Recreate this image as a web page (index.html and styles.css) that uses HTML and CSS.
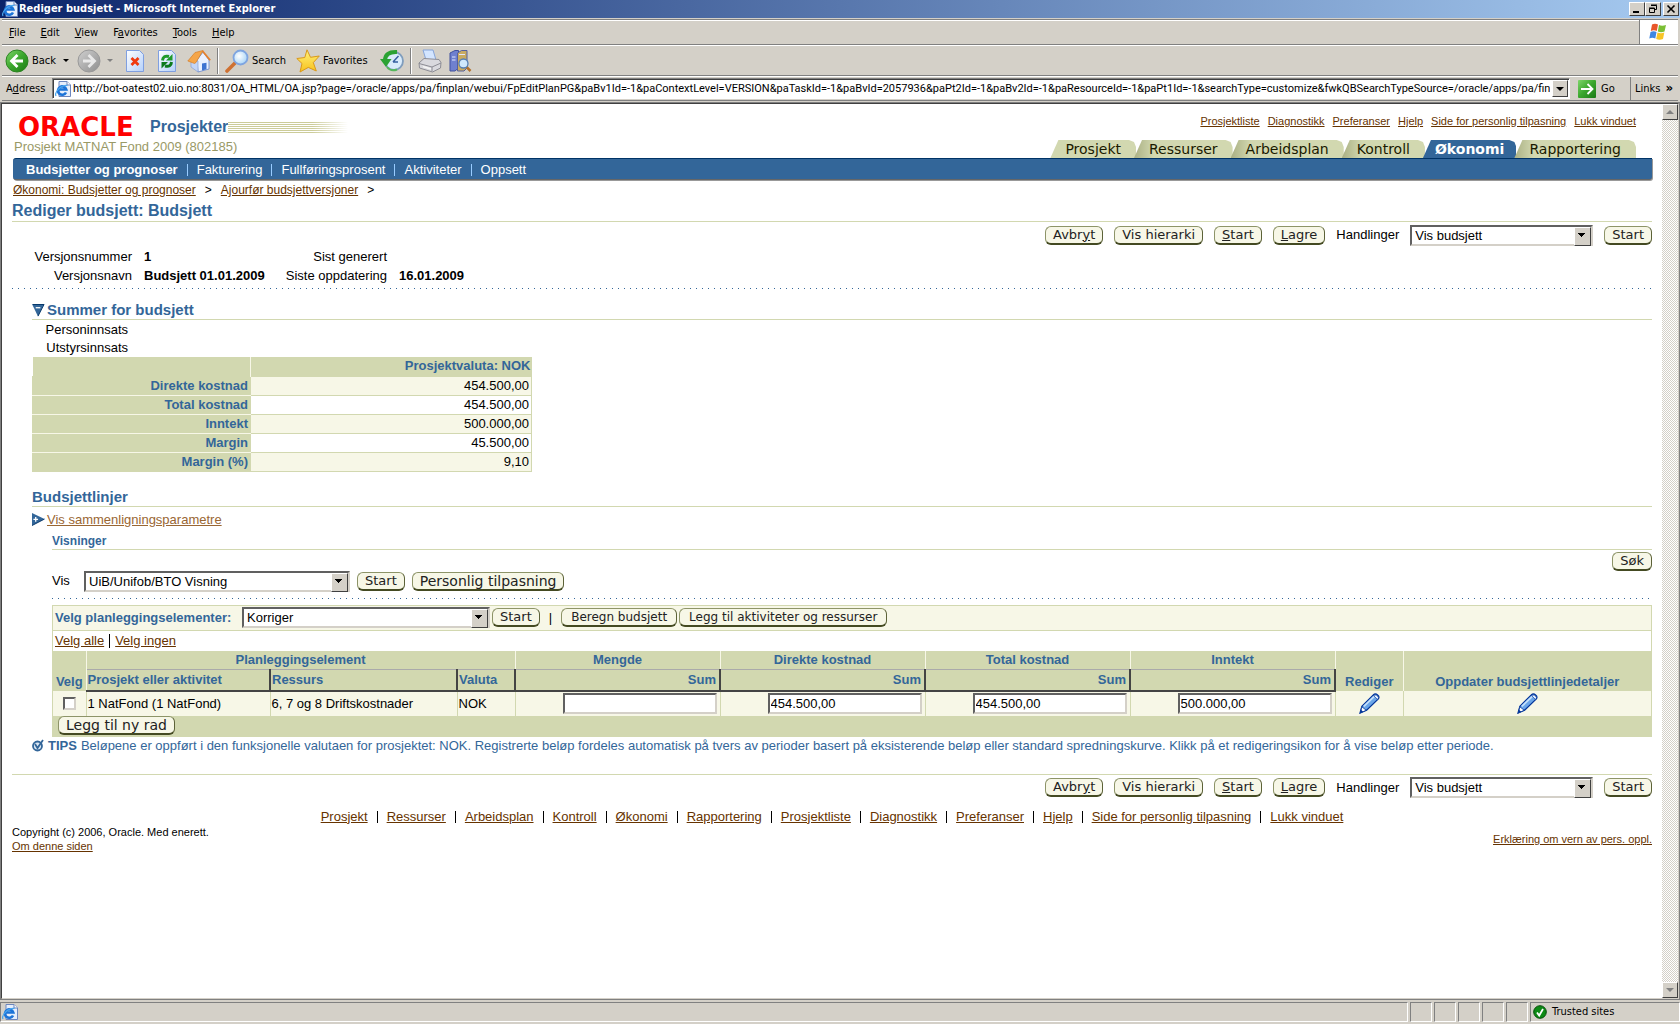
FILE: index.html
```html
<!DOCTYPE html>
<html lang="no">
<head>
<meta charset="utf-8">
<title>Rediger budsjett</title>
<link rel="stylesheet" href="styles.css">
</head>
<body>
<svg class="defs" aria-hidden="true">
  <defs>
    <linearGradient id="g-green" x1="0" y1="0" x2="1" y2="1"><stop offset="0" stop-color="#7fd66a"/><stop offset=".5" stop-color="#3aa62c"/><stop offset="1" stop-color="#1c7a16"/></linearGradient>
    <linearGradient id="g-grey" x1="0" y1="0" x2="1" y2="1"><stop offset="0" stop-color="#d0d0d0"/><stop offset="1" stop-color="#8e8e8e"/></linearGradient>
    <linearGradient id="g-page" x1="0" y1="0" x2="1" y2="1"><stop offset="0" stop-color="#fff"/><stop offset="1" stop-color="#b4d0fa"/></linearGradient>
    <linearGradient id="g-star" x1="0" y1="0" x2="0" y2="1"><stop offset="0" stop-color="#fff27a"/><stop offset="1" stop-color="#f7c11c"/></linearGradient>
    <radialGradient id="g-lens" cx=".4" cy=".4" r=".7"><stop offset="0" stop-color="#fff"/><stop offset="1" stop-color="#9fd0f6"/></radialGradient>
    <symbol id="ie" viewBox="0 0 16 16">
      <path d="M4 .5h8l3.500 3.500v11.500H4z" fill="#e6eefb" stroke="#6d86bd"/>
      <path d="M12 .5V4h3.500" fill="#fff" stroke="#6d86bd"/>
      <path d="M11 11.500A4.200 4.200 0 1 1 11.300 8.500H4" fill="none" stroke="#1c74d8" stroke-width="2.600"/>
      <path d="M1 15C-1 11 6 4 12.500 4.500" fill="none" stroke="#49a6ee" stroke-width="1.200"/>
    </symbol>
    <symbol id="pencil" viewBox="0 0 22 22">
      <path d="M1 21l2-7L15 2q2-2 4.500 0t.5 4.500L8 18z" fill="#6aa5e8" stroke="#003399" stroke-width="1.300"/>
      <path d="M5 14L16 3.500" stroke="#c3e0fb" stroke-width="2"/>
      <path d="M15 2.500l4.500 4.500 1-2.500-2.500-2.500z" fill="#e8f2ff" stroke="#003399" stroke-width=".7"/>
      <path d="M3 14.500l4.500 3.500-6 3z" fill="#fff" stroke="#003399" stroke-width=".8"/><path d="M1 21l1-3.500 2.500 2.200z" fill="#003399"/>
    </symbol>
  </defs>
</svg>

<header class="titlebar">
  <svg class="ico16"><use href="#ie"/></svg>
  <span class="titlebar-text">Rediger budsjett - Microsoft Internet Explorer</span>
  <span class="win-buttons">
    <button class="win-btn" aria-label="Minimer"><svg viewBox="0 0 12 10"><path d="M2 8h6" stroke="#000" stroke-width="2"/></svg></button>
    <button class="win-btn" aria-label="Gjenopprett"><svg viewBox="0 0 12 10"><path d="M4 1h6M4 1.500h5.500v4H8M2 4h5.500v4.500h-5V4.500h5" fill="none" stroke="#000"/></svg></button>
    <button class="win-btn win-close" aria-label="Lukk"><svg viewBox="0 0 12 10"><path d="M2.500 1.500l7 7m0-7l-7 7" stroke="#000" stroke-width="1.600"/></svg></button>
  </span>
</header>

<div class="menubar">
  <nav class="menus">
    <button class="menu"><u>F</u>ile</button><button class="menu"><u>E</u>dit</button><button class="menu"><u>V</u>iew</button><button class="menu">F<u>a</u>vorites</button><button class="menu"><u>T</u>ools</button><button class="menu"><u>H</u>elp</button>
  </nav>
  <span class="flag"><svg viewBox="0 0 20 18"><path d="M3 1.500q3-1.500 6 0L7.800 8q-3-1.300-6 0z" fill="#e8562a"/><path d="M10 2q3 1.500 7 0L15.500 8.500q-3.500 1.300-6.700 0z" fill="#7bbf35"/><path d="M1.500 9q3-1.400 6 0L6.300 15.500q-3-1.400-6 0z" fill="#3f86e0"/><path d="M8.500 9.500q3.500 1.300 6.800 0L14 16q-3.500 1.500-6.800 0z" fill="#f7c426"/></svg></span>
</div>

<div class="toolbar">
  <button class="tool t-back"><svg class="ico24" viewBox="0 0 24 24"><circle cx="12" cy="12" r="11" fill="url(#g-green)" stroke="#2d8423"/><path d="M12.500 6L6.500 12l6 6M7 12h11" fill="none" stroke="#fff" stroke-width="2.800"/></svg>Back</button>
  <i class="caret"></i>
  <button class="tool" aria-label="Fram"><svg class="ico24" viewBox="0 0 24 24"><circle cx="12" cy="12" r="11" fill="url(#g-grey)" stroke="#999"/><path d="M11.500 6l6 6-6 6M17 12H6" fill="none" stroke="#e9e9e9" stroke-width="2.800"/></svg></button>
  <i class="caret dim"></i>
  <button class="tool t-stop" aria-label="Stopp"><svg class="ico24" viewBox="0 0 24 24"><path d="M3.500 1.500h13l4 4v17h-17z" fill="url(#g-page)" stroke="#7f9fe0"/><path d="M8.500 9l7 7m0-7l-7 7" stroke="#f03a10" stroke-width="2.800"/></svg></button>
  <button class="tool t-refresh" aria-label="Oppdater"><svg class="ico24" viewBox="0 0 24 24"><path d="M3.500 1.500h13l4 4v17h-17z" fill="url(#g-page)" stroke="#7f9fe0"/><path d="M7.500 11.500Q8 6 14 7.500" fill="none" stroke="#1f9a2c" stroke-width="3"/><path d="M11 11.500h6.500V5z" fill="#1f9a2c"/><path d="M16.500 13q-.5 5.500-6.500 4" fill="none" stroke="#0c7a1c" stroke-width="3"/><path d="M13 13H6.500v6.500z" fill="#0c7a1c"/></svg></button>
  <button class="tool t-home" aria-label="Hjem"><svg class="ico24" viewBox="0 0 24 24"><path d="M10 11l6-8 6 8v9l-11 3z" fill="#eaf1ff" stroke="#7e97cf"/><path d="M15 14.500l4.500-.8v6.600l-4.500 1.200z" fill="#3f74d1"/><path d="M4 11v7l7 5V12z" fill="#c3d5f7" stroke="#7e97cf" stroke-width=".6"/><path d="M.8 12L8 3.500l8-2L9 13.500l-1.500 1z" fill="#f5a548" stroke="#d2761c" stroke-width=".6"/><path d="M15.500 2l7.700 9.300" stroke="#e8802a" stroke-width="1.800"/></svg></button>
  <i class="sep"></i>
  <button class="tool"><svg class="ico24" viewBox="0 0 24 24"><path d="M2 22l8-8" stroke="#cf7132" stroke-width="3.600" stroke-linecap="round"/><circle cx="15.500" cy="8.500" r="7" fill="url(#g-lens)" stroke="#7fa5e0" stroke-width="1.800"/></svg>Search</button>
  <button class="tool t-fav"><svg class="ico24" viewBox="0 0 24 24"><path d="M11 .8l3.500 7.500 8.800-1.300-6 6.600 3 8.400-8-3.600L4 23l2-8.500L.8 9.500l8-1z" fill="url(#g-star)" stroke="#d9981b"/></svg>Favorites</button>
  <button class="tool t-hist" aria-label="Logg"><svg class="ico24" viewBox="0 0 24 24"><circle cx="14" cy="12" r="9" fill="#d9ebfb" stroke="#7f9dbd" stroke-width="1.800"/><path d="M13 13l5.500-6M13 13h5" stroke="#3560a0" stroke-width="1.500"/><path d="M17 3Q5.500 2.500 5 11" fill="none" stroke="#2aa233" stroke-width="4"/><path d="M0 10h11.500L6 18z" fill="#2aa233"/><path d="M7 18q4 5 10 2.500" fill="none" stroke="#54b85b" stroke-width="2"/></svg></button>
  <i class="sep"></i>
  <button class="tool" aria-label="Skriv ut"><svg class="ico24" viewBox="0 0 24 24"><path d="M5 1h10l3 10H8z" fill="#d3e5ff" stroke="#86a5da"/><path d="M1 14l5-4.500 15 1 2 3-.5 5.500-8 4L1.500 19z" fill="#d9d9de" stroke="#8c8c94"/><path d="M1 14.500l13 3.500 9-4M14 18v4.500" fill="none" stroke="#8c8c94"/><path d="M5 17.500l8 2.500" stroke="#f5f5f5" stroke-width="1.500"/></svg></button>
  <button class="tool" aria-label="Slå opp"><svg class="ico24" viewBox="0 0 24 24"><path d="M2 4l5-2.500h3.500V19L7 22H2z" fill="#6f80cf" stroke="#41519d"/><path d="M9.500 4l4-2.500H19V19l-3 3H9.500z" fill="#c9ab62" stroke="#5560a0"/><path d="M4 8h3.500M4 11h3.500M11 5.500h6" stroke="#e2e7ff"/><path d="M18.500 18l4 4" stroke="#b1712d" stroke-width="2.500"/><circle cx="15.500" cy="14.500" r="4.500" fill="#cfe8fd" stroke="#557fb5" stroke-width="1.300"/></svg></button>
</div>

<div class="addressbar">
  <label class="address-label" for="url">A<u>d</u>dress</label>
  <span class="address-field">
    <svg class="ico16"><use href="#ie"/></svg>
    <input id="url" type="text" value="http://bot-oatest02.uio.no:8031/OA_HTML/OA.jsp?page=/oracle/apps/pa/finplan/webui/FpEditPlanPG&amp;paBv1Id=-1&amp;paContextLevel=VERSION&amp;paTaskId=-1&amp;paBvId=2057936&amp;paPt2Id=-1&amp;paBv2Id=-1&amp;paResourceId=-1&amp;paPt1Id=-1&amp;searchType=customize&amp;fwkQBSearchTypeSource=/oracle/apps/pa/fin">
    <button class="drop" aria-label="Vis adresser"></button>
  </span>
  <button class="go"><svg viewBox="0 0 18 18"><rect width="18" height="18" rx="1" fill="url(#g-green)"/><path d="M3 9h11M9.500 4l5 5-5 5" fill="none" stroke="#fff" stroke-width="1.800"/></svg>Go</button>
  <button class="links">Links <b>»</b></button>
</div>

<div class="viewport">
  <main class="page">
    <div class="masthead">
      <div class="brand">
        <div class="brand-row"><span class="logo">ORACLE</span><span class="product">Prosjekter</span><span class="stripes"></span></div>
        <div class="context">Prosjekt MATNAT Fond 2009 (802185)</div>
      </div>
      <div class="global">
        <nav class="global-links"><a href="#">Prosjektliste</a><a href="#">Diagnostikk</a><a href="#">Preferanser</a><a href="#">Hjelp</a><a href="#">Side for personlig tilpasning</a><a href="#">Lukk vinduet</a></nav>
        <nav class="tabs"><a class="tab" href="#">Prosjekt</a><a class="tab" href="#">Ressurser</a><a class="tab" href="#">Arbeidsplan</a><a class="tab" href="#">Kontroll</a><a class="tab current" href="#">Økonomi</a><a class="tab" href="#">Rapportering</a></nav>
      </div>
    </div>
    <nav class="subnav"><a class="current" href="#">Budsjetter og prognoser</a><a href="#">Fakturering</a><a href="#">Fullføringsprosent</a><a href="#">Aktiviteter</a><a href="#">Oppsett</a></nav>
    <nav class="crumbs"><a href="#">Økonomi: Budsjetter og prognoser</a><span>&gt;</span><a href="#">Ajourfør budsjettversjoner</a><span>&gt;</span></nav>
    <h1>Rediger budsjett: Budsjett</h1>

    <div class="actions">
      <button class="btn">Avbr<u>y</u>t</button><button class="btn">Vis hierarki</button><button class="btn"><u>S</u>tart</button><button class="btn"><u>L</u>agre</button>
      <label for="act1">Handlinger</label>
      <span class="select w-action"><select id="act1"><option>Vis budsjett</option></select></span>
      <button class="btn">Start</button>
    </div>

    <dl class="details">
      <dt>Versjonsnummer</dt><dd>1</dd><dt>Sist generert</dt><dd></dd>
      <dt>Versjonsnavn</dt><dd>Budsjett 01.01.2009</dd><dt>Siste oppdatering</dt><dd>16.01.2009</dd>
    </dl>
    <div class="dots"></div>

    <section class="block">
      <h2><svg class="disc" viewBox="0 0 14 14"><path d="M0 0h13L6.500 13.500z" fill="#336699"/><path d="M1 .5h12L6.500 13" fill="none" stroke="#003366"/><path d="M4 4h5" stroke="#fff" stroke-width="1.400"/></svg>Summer for budsjett</h2>
      <div class="facts">
        <p>Personinnsats</p>
        <p>Utstyrsinnsats</p>
      </div>
      <table class="totals">
        <thead><tr><th></th><th>Prosjektvaluta: NOK</th></tr></thead>
        <tbody>
          <tr><th>Direkte kostnad</th><td>454.500,00</td></tr>
          <tr><th>Total kostnad</th><td>454.500,00</td></tr>
          <tr><th>Inntekt</th><td>500.000,00</td></tr>
          <tr><th>Margin</th><td>45.500,00</td></tr>
          <tr><th>Margin (%)</th><td>9,10</td></tr>
        </tbody>
      </table>
    </section>

    <section class="block lines">
      <h2>Budsjettlinjer</h2>
      <p class="compare"><svg class="disc" viewBox="0 0 14 14"><path d="M0 0l13.500 6.500L0 13.500z" fill="#336699"/><path d="M0 13.500l13.500-7" stroke="#003366"/><path d="M1.500 6.800h5M4 4.300v5" stroke="#fff" stroke-width="1.400"/></svg><a href="#">Vis sammenligningsparametre</a></p>
      <div class="views">
        <h3>Visninger</h3>
        <div class="search"><button class="btn">Søk</button></div>
        <div class="viewrow">
          <label for="vis">Vis</label>
          <span class="select w-view"><select id="vis"><option>UiB/Unifob/BTO Visning</option></select></span>
          <button class="btn">Start</button><button class="btn large">Personlig tilpasning</button>
        </div>
        <div class="dots"></div>

        <div class="grid">
          <div class="gridbar">
            <label for="velg">Velg planleggingselementer:</label>
            <span class="select w-pick"><select id="velg"><option>Korriger</option></select></span>
            <button class="btn">Start</button><span class="bar">|</span><button class="btn small">Beregn budsjett</button><button class="btn small">Legg til aktiviteter og ressurser</button>
          </div>
          <div class="picks"><a href="#">Velg alle</a><i class="vbar"></i><a href="#">Velg ingen</a></div>
          <table class="plan">
            <colgroup><col class="c-check"><col class="c-proj"><col class="c-res"><col class="c-cur"><col class="c-sum"><col class="c-sum"><col class="c-sum"><col class="c-sum"><col class="c-edit"><col></colgroup>
            <thead>
              <tr><th rowspan="2">Velg</th><th colspan="3">Planleggingselement</th><th>Mengde</th><th>Direkte kostnad</th><th>Total kostnad</th><th>Inntekt</th><th rowspan="2">Rediger</th><th rowspan="2">Oppdater budsjettlinjedetaljer</th></tr>
              <tr class="sortable"><th>Prosjekt eller aktivitet</th><th>Ressurs</th><th>Valuta</th><th class="num">Sum</th><th class="num">Sum</th><th class="num">Sum</th><th class="num">Sum</th></tr>
            </thead>
            <tbody>
              <tr>
                <td class="mid"><input type="checkbox" aria-label="Velg rad"></td><td>1 NatFond (1 NatFond)</td><td>6, 7 og 8 Driftskostnader</td><td>NOK</td>
                <td class="num"><input class="amount" type="text" aria-label="Mengde" value=""></td>
                <td class="num"><input class="amount" type="text" aria-label="Direkte kostnad" value="454.500,00"></td>
                <td class="num"><input class="amount" type="text" aria-label="Total kostnad" value="454.500,00"></td>
                <td class="num"><input class="amount" type="text" aria-label="Inntekt" value="500.000,00"></td>
                <td class="mid"><a href="#" aria-label="Rediger"><svg class="pencil"><use href="#pencil"/></svg></a></td>
                <td class="mid"><a href="#" aria-label="Oppdater"><svg class="pencil"><use href="#pencil"/></svg></a></td>
              </tr>
            </tbody>
          </table>
          <div class="gridfoot"><button class="btn large">Legg til ny rad</button></div>
        </div>
      </div>
      <p class="tips"><svg class="tip" viewBox="0 0 12 13"><circle cx="5.500" cy="7" r="4.500" fill="#dbe7f3" stroke="#336699" stroke-width="1.800"/><path d="M3 5l2.500 4L11 1" fill="none" stroke="#336699" stroke-width="1.800"/></svg><b>TIPS</b> Beløpene er oppført i den funksjonelle valutaen for prosjektet: NOK. Registrerte beløp fordeles automatisk på tvers av perioder basert på eksisterende beløp eller standard spredningskurve. Klikk på et redigeringsikon for å vise beløp etter periode.</p>
    </section>

    <div class="actions bottom">
      <button class="btn">Avbr<u>y</u>t</button><button class="btn">Vis hierarki</button><button class="btn"><u>S</u>tart</button><button class="btn"><u>L</u>agre</button>
      <label for="act2">Handlinger</label>
      <span class="select w-action"><select id="act2"><option>Vis budsjett</option></select></span>
      <button class="btn">Start</button>
    </div>

    <footer>
      <nav class="footlinks"><a href="#">Prosjekt</a><i></i><a href="#">Ressurser</a><i></i><a href="#">Arbeidsplan</a><i></i><a href="#">Kontroll</a><i></i><a href="#">Økonomi</a><i></i><a href="#">Rapportering</a><i></i><a href="#">Prosjektliste</a><i></i><a href="#">Diagnostikk</a><i></i><a href="#">Preferanser</a><i></i><a href="#">Hjelp</a><i></i><a href="#">Side for personlig tilpasning</a><i></i><a href="#">Lukk vinduet</a></nav>
      <div class="legal"><div>Copyright (c) 2006, Oracle. Med enerett.<br><a href="#">Om denne siden</a></div><a href="#">Erklæring om vern av pers. oppl.</a></div>
    </footer>
  </main>
  <div class="scrollbar"><button class="up" aria-label="Rull opp"></button><button class="down" aria-label="Rull ned"></button></div>
</div>

<div class="statusbar">
  <span class="cell message"><svg class="ico16"><use href="#ie"/></svg></span><span class="cell"></span><span class="cell"></span><span class="cell"></span><span class="cell"></span><span class="cell"></span>
  <span class="cell zone"><svg viewBox="0 0 14 14"><circle cx="7" cy="7" r="6.300" fill="#0d8a15" stroke="#064d0a"/><path d="M4 7.500l2.200 3L10 4" fill="none" stroke="#fff" stroke-width="1.800"/></svg>Trusted sites</span>
</div>
</body>
</html>
```

FILE: styles.css
```css
* { box-sizing: border-box; }
body {
  margin: 0;
  min-height: 100vh;
  display: flex;
  flex-direction: column;
  background: #d4d0c8;
  color: #000;
  font: 13px/18px "Liberation Sans", Arial, sans-serif;
}
button, input, select { font: inherit; color: inherit; margin: 0; padding: 0; border: 0; border-radius: 0; background: none; }
a { color: #663300; }
h1, h2, h3, p, dl, dd { margin: 0; }
svg { display: block; flex: none; }
.defs { position: absolute; width: 0; height: 0; }
.ico16 { width: 16px; height: 16px; }
.ico24 { width: 24px; height: 24px; }

/* Window chrome */
.titlebar, .menubar, .toolbar, .addressbar, .statusbar {
  display: flex;
  align-items: center;
  font: 11px/14px "DejaVu Sans Condensed", Tahoma, sans-serif;
}
.titlebar {
  height: 18px;
  padding: 0 1px 0 2px;
  gap: 1px;
  background: linear-gradient(90deg, #0a246a, #a6caf0);
  color: #fff;
  font-weight: bold;
}
.titlebar-text { flex: 1; }
.win-buttons { display: flex; }
.win-btn {
  width: 16px; height: 14px;
  display: flex; align-items: center; justify-content: center;
  background: #d4d0c8;
  border: 1px solid; border-color: #fff #404040 #404040 #fff;
}
.win-btn svg { width: 12px; height: 10px; }
.win-close { margin-left: 2px; }
.menubar { height: 26px; border-top: 1px solid #808080; border-bottom: 1px solid #808080; box-shadow: inset 0 1px #fff; justify-content: space-between; align-items: stretch; margin: 1px 2px 0; }
.menus { display: flex; gap: 15px; padding: 2px 0 0 7px; }
.flag { width: 39px; display: flex; align-items: center; justify-content: center; background: #fff; border-left: 1px solid #808080; }
.flag svg { width: 20px; height: 18px; }
.toolbar { height: 31px; margin: 0 2px; padding-left: 3px; border-top: 1px solid #fff; border-bottom: 1px solid #808080; }
.tool { display: flex; align-items: center; gap: 3px; height: 26px; margin-right: 6px; }
.caret { border: 3px solid transparent; border-top-color: #000; border-bottom: 0; margin: 0 8px 0 1px; }
.caret.dim { border-top-color: #808080; margin: 0 10px 0 0; }
.t-stop, .t-refresh { margin-right: 8px; }
.sep { width: 2px; height: 26px; border-left: 1px solid #808080; border-right: 1px solid #fff; margin-right: 6px; }
.t-fav { margin-left: 4px; margin-right: 12px; }
.addressbar { height: 25px; margin: 0 2px; border-top: 1px solid #fff; border-bottom: 1px solid #808080; padding-left: 4px; }
.address-label { width: 46px; }
.address-field { flex: 1; display: flex; align-items: center; gap: 2px; height: 21px; background: #fff; padding: 1px 1px 1px 2px; border: 1px solid; border-color: #808080 #fff #fff #808080; box-shadow: inset 1px 1px #404040; }
.address-field input { flex: 1; min-width: 0; height: 17px; font-family: Roboto, Arial, sans-serif; }
.drop { width: 16px; height: 17px; background: #d4d0c8; border: 1px solid; border-color: #fff #404040 #404040 #fff; display: flex; align-items: center; justify-content: center; }
.drop::before { content: ""; border: 4px solid transparent; border-top-color: #000; border-bottom: 0; }
.go { display: flex; align-items: center; gap: 5px; width: 60px; padding-left: 8px; }
.go svg { width: 18px; height: 18px; }
.links { width: 48px; height: 23px; border-left: 1px solid #808080; text-align: left; padding-left: 4px; white-space: nowrap; }
.links b { margin-left: 2px; font-size: 13px; }

/* Page */
.viewport { flex: 1; display: flex; background: #fff; border: 1px solid; border-color: #404040 #d4d0c8 #d4d0c8 #404040; outline: 1px solid #808080; margin: 2px 1px 3px; }
.page { flex: 1; min-width: 0; padding: 0 10px 0 10px; }
.scrollbar { width: 16px; display: flex; flex-direction: column; justify-content: space-between; background: repeating-conic-gradient(#fff 0 25%, #d4d0c8 0 50%) 0 0 / 2px 2px; }
.scrollbar button { height: 16px; background: #d4d0c8; border: 1px solid; border-color: #fff #404040 #404040 #fff; display: flex; align-items: center; justify-content: center; }
.scrollbar button::before { content: ""; border: 4px solid transparent; }
.scrollbar .up::before { border-top-width: 0; border-bottom-color: #808080; }
.scrollbar .down::before { border-bottom-width: 0; border-top-color: #808080; }

.masthead { display: flex; justify-content: space-between; height: 54px; }
.brand { padding-top: 12px; }
.brand-row { display: flex; align-items: center; height: 22px; padding-left: 6px; }
.logo { width: 132px; color: #f00; font: bold 26px/22px "DejaVu Sans", sans-serif; }
.product { color: #336699; font-weight: bold; font-size: 16px; }
.stripes { width: 120px; height: 11px; background: linear-gradient(90deg, transparent 70%, #fff), repeating-linear-gradient(#cccc99 0 1px, #fff 1px 2px); }
.context { padding-left: 2px; color: #999966; }
.global { display: flex; flex-direction: column; justify-content: space-between; padding: 9px 16px 0 0; align-items: flex-end; }
.global-links { display: flex; gap: 8px; font-size: 11px; line-height: 16px; }
.tabs { display: flex; font: 14px/18px "DejaVu Sans", sans-serif; }
.tab { margin-left: -2px; padding: 0 15px; color: #1a1a00; text-decoration: none; background: linear-gradient(90deg, #aab084, #d2d8b0 20px); clip-path: polygon(8px 0, calc(100% - 7px) 0, calc(100% - 2px) 2px, 100% 7px, 100% 100%, 0 100%); }
.tab:first-child { background: #d2d8b0; }
.tab.current { background: #336699; color: #fff; font-weight: bold; padding: 0 12px; }
.subnav { display: flex; align-items: center; height: 22px; margin: 0 0 1px 1px; padding: 1px 0 0 13px; background: #336699; border-top: 1px solid #003366; border-bottom: 1px solid #666; border-radius: 3px 0 3px 3px; box-shadow: 1px 1px #999; color: #fff; }
.subnav a { color: #fff; text-decoration: none; display: flex; align-items: center; }
.subnav a + a::before { content: ""; width: 1px; height: 12px; background: #99ccff; margin: 0 9px; }
.subnav .current { font-weight: bold; }
.crumbs { display: flex; gap: 9px; height: 20px; padding-left: 1px; line-height: 18px; font-size: 12px; }
h1, h2 { color: #336699; font-size: 16px; line-height: 20px; border-bottom: 1px solid #d2d8b0; }
h2 { display: flex; align-items: center; gap: 2px; font-size: 15px; line-height: 18px; }
h3 { color: #336699; font-size: 12px; line-height: 16px; border-bottom: 1px solid #d2d8b0; }

.btn {
  height: 19px;
  padding: 0 7px;
  background: #f7f7e7;
  border: 1px solid #8d9468;
  border-bottom: 2px solid #444a22;
  border-right-color: #5c6238;
  border-radius: 6px;
  font: 13px/16px "DejaVu Sans", sans-serif;
  color: #222;
  white-space: nowrap;
}
.btn.small { font-size: 12px; padding: 0 9px; }
.btn.large { font-size: 14px; }
.select { position: relative; display: flex; }
.select select { appearance: none; width: 100%; height: 21px; padding: 0 20px 0 3px; background: #fff; border: 2px solid; border-color: #606060 #d4d0c8 #d4d0c8 #606060; }
.select::after { content: ""; position: absolute; right: 2px; top: 2px; width: 15px; height: 17px; border: 1px solid; border-color: #fff #404040 #404040 #fff; background: linear-gradient(#000, #000) 3px 5px / 7px 1px no-repeat, linear-gradient(#000, #000) 4px 6px / 5px 1px no-repeat, linear-gradient(#000, #000) 5px 7px / 3px 1px no-repeat, linear-gradient(#000, #000) 6px 8px / 1px 1px no-repeat, #d4d0c8; pointer-events: none; }
.w-action { width: 183px; }
.w-view { width: 266px; }
.w-pick { width: 248px; }
.actions { display: flex; justify-content: flex-end; align-items: center; gap: 11px; height: 26px; margin-bottom: -1px; }
.actions.bottom { margin: 19px 0 0; border-top: 1px solid #d2d8b0; height: 27px; }

.details { display: grid; grid-template-columns: 120px 124px 107px auto; column-gap: 12px; line-height: 19px; }
.details dt { text-align: right; }
.details dd { font-weight: bold; }
.dots { height: 1px; margin-top: 3px; background: repeating-linear-gradient(90deg, #336699 0 1px, transparent 1px 6px); }
.block { margin: 12px 0 0 20px; }
.disc { width: 13px; height: 13px; }
.facts { width: 96px; padding-top: 1px; text-align: right; }
.totals, .plan { border-collapse: collapse; }
.totals { width: 500px; table-layout: fixed; }
.totals th, .totals td { height: 19px; padding: 0 2px; text-align: right; line-height: 18px; border: 1px solid #d2d8b0; }
.totals th { color: #336699; background: #d2d8b0; border-bottom-color: #f7f7e7; }
.totals th:first-child { width: 218px; }
.totals thead th { border: 0; }
.totals thead th + th { border-left: 1px solid #f7f7e7; padding-right: 1px; }
.totals tbody tr:last-child th { border-bottom-color: #d2d8b0; }
.totals tbody tr:nth-child(odd) td { background: #f7f7e7; }
.lines { margin-top: 16px; }
.compare { display: flex; align-items: center; height: 26px; gap: 2px; }
.compare a { color: #996633; }
.views { margin-left: 20px; }
.search { display: flex; justify-content: flex-end; padding-top: 2px; }
.viewrow { display: flex; align-items: center; gap: 7px; margin-bottom: 6px; }
.viewrow label { width: 25px; }
.grid { margin-top: 6px; border: 1px solid #d2d8b0; }
.gridbar { display: flex; align-items: center; height: 25px; padding-left: 2px; gap: 2px; background: #f7f7e7; border-bottom: 1px solid #d2d8b0; }
.gridbar label { color: #336699; font-weight: bold; width: 185px; white-space: nowrap; }
.bar { margin: 0 7px; }
.picks { display: flex; align-items: center; gap: 5px; height: 20px; padding-left: 2px; }
.vbar { width: 1px; height: 14px; background: #000; }
.plan { width: 100%; table-layout: fixed; }
.c-check { width: 33px; } .c-proj { width: 184px; } .c-res { width: 187px; } .c-cur { width: 58px; } .c-sum { width: 205px; } .c-edit { width: 68px; }
.plan th { height: 19px; padding: 0 1px; color: #336699; background: #d2d8b0; line-height: 18px; vertical-align: bottom; border-left: 1px solid #f7f7e7; white-space: nowrap; }
.plan th:first-child { border-left: 0; }
.plan .sortable th { height: 21px; text-align: left; vertical-align: middle; border-top: 1px solid #aaa; border-bottom: 2px solid #444; border-right: 2px solid #444; border-left: 0; }
.plan .sortable th:first-child { border-left: 1px solid #f7f7e7; }
.plan td { height: 25px; padding: 0 1px; background: #f7f7e7; border-left: 1px solid #d2d8b0; }
.plan td:first-child { border-left: 0; }
.plan .num, .plan .sortable .num { text-align: right; padding-right: 3px; }
.plan .mid { text-align: center; }
.plan .mid a { display: block; }
.plan input { display: block; margin-left: auto; }
.plan .amount { width: 154px; height: 21px; padding: 0 1px; background: #fff; border: 2px solid; border-color: #606060 #d4d0c8 #d4d0c8 #606060; }
.plan input[type="checkbox"] { appearance: none; width: 13px; height: 13px; margin: 0 auto; background: #fff; border: 2px solid; border-color: #606060 #d4d0c8 #d4d0c8 #606060; }
.pencil { width: 21px; height: 21px; margin: 0 auto; }
.gridfoot { height: 20px; padding-left: 5px; background: #d2d8b0; display: flex; align-items: center; }
.tips { display: flex; align-items: center; gap: 4px; color: #336699; line-height: 18px; }
.tip { width: 12px; height: 13px; }

.footlinks { display: flex; justify-content: center; gap: 9px; padding-top: 8px; height: 24px; align-items: center; }
.footlinks i { width: 1px; height: 12px; background: #000; }
.legal { display: flex; justify-content: space-between; align-items: center; font-size: 11px; line-height: 14px; }

.statusbar { height: 20px; margin: 0 0 2px; gap: 2px; align-items: stretch; }
.cell { width: 22px; border: 1px solid; border-color: #808080 #fff #fff #808080; }
.message { flex: 1; padding: 1px; }
.zone { width: 150px; display: flex; align-items: center; gap: 5px; padding-left: 2px; }
.zone svg { width: 14px; height: 14px; }
```
